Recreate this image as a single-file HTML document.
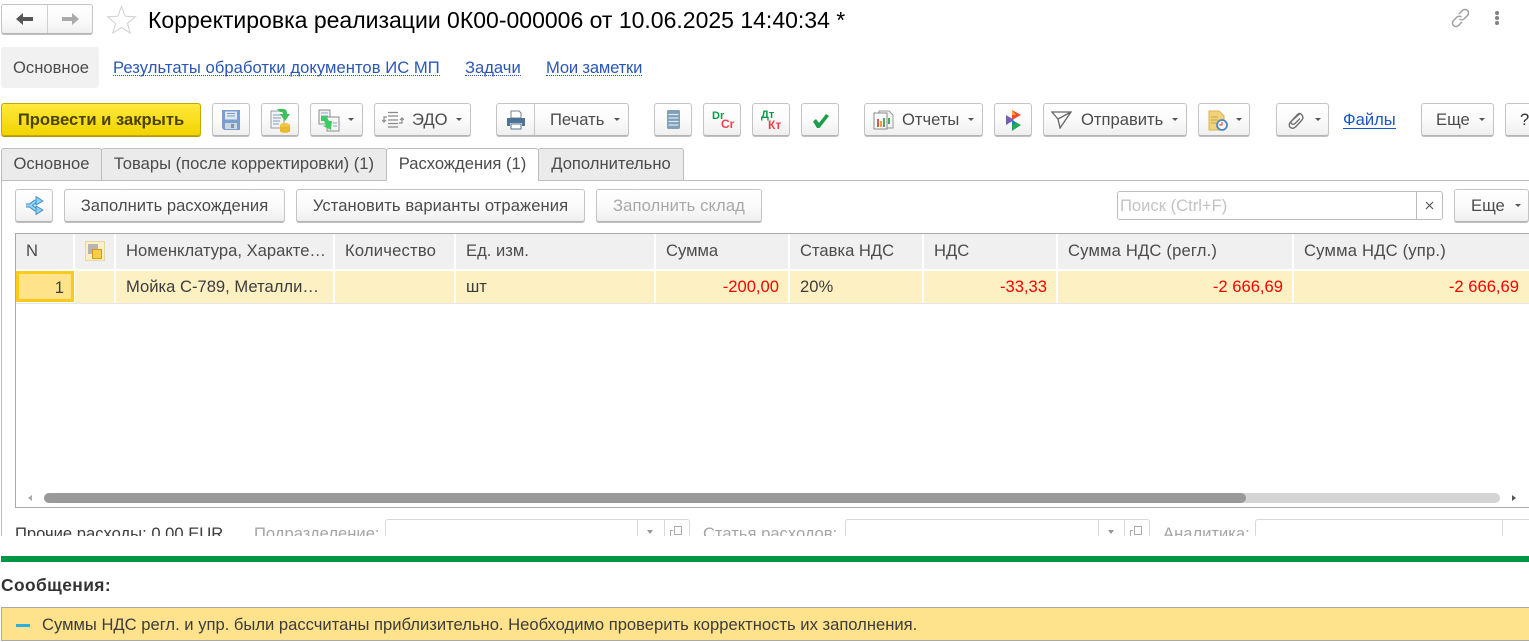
<!DOCTYPE html>
<html lang="ru"><head><meta charset="utf-8"><title>Корректировка реализации</title>
<style>
*{box-sizing:border-box}
html,body{margin:0;padding:0;background:#fff;width:1529px;height:642px;overflow:hidden}
body{position:relative;font-family:"Liberation Sans",sans-serif;font-size:16.6px;color:#4b4b4b}
.t{position:absolute;white-space:nowrap;line-height:20px;height:20px}
.b{position:absolute;height:33px;top:103px;border:1px solid #c4c4c4;border-bottom:1px solid #b4b4b4;border-radius:3px;background:linear-gradient(#fff 0%,#fbfbfb 50%,#efefef 100%);box-shadow:0 1px 0 #c0c0c0}
.b2{top:189px}
.c{text-align:center;line-height:32px;position:absolute;white-space:nowrap}
.ar{position:absolute;width:0;height:0;border-left:3px solid transparent;border-right:3px solid transparent;border-top:3px solid #555;top:14px}
svg{position:absolute;display:block}
.tab{position:absolute;top:148px;height:33px;background:#ebebeb;border:1px solid #bdbdbd;border-radius:3px 3px 0 0;line-height:30px;text-align:center;white-space:nowrap}
.h{position:absolute;top:234px;height:35px;background:#f0f0f0;line-height:34px;padding-left:10px;white-space:nowrap;overflow:hidden;border-right:2px solid #fff}
.r{position:absolute;top:271px;height:32px;background:#fdf1c4;line-height:32px;padding:0 10px;white-space:nowrap;border-right:2px solid #fff;color:#3c3c3c}
.red{color:#f00;text-align:right;padding-right:9px}
.f{position:absolute;top:519px;height:40px;border:1px solid #d8d8d8;border-radius:3px}
.d{position:absolute;top:519px;width:1px;height:20px;background:#d8d8d8}
a{color:inherit}
</style></head><body>

<!-- header -->
<div class="b" style="left:1px;top:4px;width:92px;height:30px"></div>
<div style="position:absolute;left:47px;top:5px;width:1px;height:28px;background:#cfcfcf"></div>
<svg style="left:15px;top:12px" width="20" height="14" viewBox="0 0 20 14"><path d="M1 7 8 1v4h10v4H8v4z" fill="#555"/></svg>
<svg style="left:60px;top:12px" width="20" height="14" viewBox="0 0 20 14"><path d="M19 7 12 1v4H2v4h10v4z" fill="#aaa"/></svg>
<svg style="left:106px;top:5px" width="31" height="29" viewBox="0 0 31 29"><path d="M15.5 1.500 19.200 11.200 29.500 11.800 21.500 18.400 24.200 28 15.500 22.600 6.800 28 9.500 18.400 1.500 11.800 11.800 11.200z" fill="#fff" stroke="#cfcfcf" stroke-width="1"/></svg>
<div class="t" style="left:148px;top:5px;height:30px;line-height:30px;font-size:23px;color:#000">Корректировка реализации 0К00-000006 от 10.06.2025 14:40:34 *</div>
<svg style="left:1450px;top:8px" width="21" height="20" viewBox="0 0 21 20" fill="none" stroke="#9a9a9a" stroke-width="1.400"><path d="M9 6l3.500-3.500a3.400 3.400 0 0 1 5 5L14 11a3.400 3.400 0 0 1-4.500 0"/><path d="M12 14l-3.500 3.500a3.400 3.400 0 0 1-5-5L7 9a3.400 3.400 0 0 1 4.500 0"/></svg>
<svg style="left:1494px;top:10px" width="6" height="16" viewBox="0 0 6 16" fill="#808080"><circle cx="3" cy="3" r="2"/><circle cx="3" cy="8" r="2"/><circle cx="3" cy="13" r="2"/></svg>

<!-- nav -->
<div style="position:absolute;left:1px;top:47px;width:98px;height:41px;background:#f1f1f1;border-radius:3px"></div>
<div class="t" style="left:13px;top:58px">Основное</div>
<div class="t" style="left:113px;top:58px;color:#2a56b5;border-bottom:1px dotted #2a56b5;height:18px;letter-spacing:.05px">Результаты обработки документов ИС МП</div>
<div class="t" style="left:465px;top:58px;color:#2a56b5;border-bottom:1px dotted #2a56b5;height:18px">Задачи</div>
<div class="t" style="left:546px;top:58px;color:#2a56b5;border-bottom:1px dotted #2a56b5;height:18px;letter-spacing:-.18px">Мои заметки</div>

<!-- toolbar -->
<div class="b" style="left:1px;width:200px;background:linear-gradient(#ffe93d,#f1d400);border-color:#c4a900;box-shadow:0 1px 0 #b09800;color:#4a4300;font-weight:bold"><div class="c" style="left:0;width:198px">Провести и закрыть</div></div>

<div class="b" style="left:212px;width:38px"><svg style="left:9px;top:6px" width="18" height="20" viewBox="0 0 18 20"><path d="M0 0h18v20H2l-2-2z" fill="#7a9fcc"/><path d="M3 1.500h12v8H3z" fill="#dfe8f2"/><path d="M5 3.500h8M5 6h8" stroke="#7a9fcc"/><path d="M3 13h12v6H3z" fill="#cfd8e0"/><path d="M9 14h3v4H9z" fill="#7f93aa"/></svg></div>
<div class="b" style="left:261px;width:38px"><svg style="left:8px;top:4px" width="22" height="25" viewBox="0 0 22 25"><path d="M1 3h13v17H1z" fill="#f3f3f3" stroke="#9a9a9a"/><path d="M3 7h8M3 10h8M3 13h7M3 16h6" stroke="#7d9dbb"/><path d="M7 1h6c4 0 4 3 4 5h3l-5 7-5-7h3c0-2-1-2-3-2z" fill="#3cc05a"/><ellipse cx="15" cy="17" rx="5" ry="2" fill="#f1c643"/><path d="M10 17v6c0 2.500 10 2.500 10 0v-6c0 2.500-10 2.500-10 0z" fill="#e8b92f"/></svg></div>
<div class="b" style="left:310px;width:53px"><svg style="left:7px;top:5px" width="22" height="23" viewBox="0 0 22 23"><path d="M1 1h11v14H1z" fill="#f2f2f2" stroke="#8c8c8c"/><path d="M3 4h7M3 7h7" stroke="#8fa5bb"/><path d="M9 8h12v14H9z" fill="#f5f5f5" stroke="#8c8c8c"/><path d="M15 14h4M15 17h4" stroke="#8fa5bb"/><path d="M3 7h5l3 5h3l-1 9-8-4 3-1-2-4H3z" fill="#3ecb60"/></svg><div class="ar" style="left:37px"></div></div>
<div class="b" style="left:374px;width:97px"><svg style="left:7px;top:7px" width="22" height="18" viewBox="0 0 22 18" fill="none" stroke="#8a8a8a" stroke-width="1.200"><path d="M6 1.500h10M6 5h10M6 9h10M6 12.500h10M6 16h10"/><path d="M5 6H2v5M0 9l2 2 2-2"/><path d="M17 12h3V7M18 9l2-2 2 2"/></svg><div class="c" style="left:37px">ЭДО</div><div class="ar" style="left:81px"></div></div>

<div class="b" style="left:496px;width:133px"><div style="position:absolute;left:37px;top:0;width:1px;height:31px;background:#c8c8c8"></div><svg style="left:9px;top:6px" width="20" height="20" viewBox="0 0 20 20"><path d="M5 1h8l2 2v5H5z" fill="#fff" stroke="#77838f"/><path d="M1 8h18v8h-3v-3H4v3H1z" fill="#4e7396"/><path d="M5 14h10v5H5z" fill="#fff" stroke="#4e7396"/></svg><div class="c" style="left:53px">Печать</div><div class="ar" style="left:117px"></div></div>

<div class="b" style="left:654px;width:38px"><svg style="left:12px;top:6px" width="13" height="19" viewBox="0 0 13 19"><rect width="13" height="19" rx="1.500" fill="#7fa0b8"/><path d="M1.500 4.500h10M1.500 8h10M1.500 11.500h10M1.500 15h10" stroke="#dfe8ee" stroke-width="1.200"/></svg></div>
<div class="b" style="left:703px;width:38px"><div style="position:absolute;left:8px;top:6px;font-size:11px;font-weight:bold;color:#0a9a4a;line-height:12px">Dr</div><div style="position:absolute;left:17px;top:14px;font-size:12px;font-weight:bold;color:#ee3f4a;line-height:13px">Cr</div></div>
<div class="b" style="left:752px;width:38px"><div style="position:absolute;left:8px;top:5px;font-size:11px;font-weight:bold;color:#0a9a4a;line-height:12px">Дт</div><div style="position:absolute;left:15px;top:15px;font-size:12px;font-weight:bold;color:#ee3f4a;line-height:13px">Кт</div></div>
<div class="b" style="left:801px;width:38px"><svg style="left:10px;top:9px" width="18" height="16" viewBox="0 0 18 16"><path d="M1 8.500 4 6l3 4 7-9 3 2-9.500 12h-2.500z" fill="#1e9e48"/></svg></div>

<div class="b" style="left:864px;width:119px"><svg style="left:8px;top:6px" width="21" height="20" viewBox="0 0 21 20"><path d="M6 1h10l4 4v13H6z" fill="#f4f4f4" stroke="#9a9a9a"/><path d="M1 3h13v16H1z" fill="#fbfbfb" stroke="#8a8a8a"/><path d="M4 9h2v8H4z" fill="#e0574f"/><path d="M7 11h2v6H7z" fill="#e7a13c"/><path d="M10 8h2v9h-2z" fill="#52a85a"/><path d="M15 8h2v6h-2z" fill="#52a85a"/></svg><div class="c" style="left:37px">Отчеты</div><div class="ar" style="left:103px"></div></div>
<div class="b" style="left:994px;width:38px"><svg style="left:10px;top:6px" width="18" height="21" viewBox="0 0 18 21"><path d="M7 0 16 5 7 10z" fill="#f04b2f"/><path d="M7 0v5l4 0z" fill="#f5a623"/><path d="M1 5l8 5-8 5z" fill="#7b5bb5"/><path d="M7 10l9 5-9 6z" fill="#24a855"/><path d="M7 10l4 2.500L7 15z" fill="#1a7fd4"/></svg></div>
<div class="b" style="left:1043px;width:144px"><svg style="left:7px;top:7px" width="21" height="18" viewBox="0 0 21 18" fill="none" stroke="#666" stroke-width="1.300"><path d="M1 1h19L9 17 7 8zM7 8 20 1"/></svg><div class="c" style="left:37px">Отправить</div><div class="ar" style="left:128px"></div></div>
<div class="b" style="left:1198px;width:52px"><svg style="left:9px;top:6px" width="20" height="21" viewBox="0 0 20 21"><path d="M1 1h10l5 5v14H1z" fill="#f0d27a" stroke="#d8b458"/><path d="M3 7h7M3 10h7M3 13h5" stroke="#c9a548"/><circle cx="14" cy="15" r="5" fill="#fff" stroke="#4b86c4" stroke-width="1.800"/><path d="M14 12v3h-3" stroke="#e84b4b" stroke-width="1.200" fill="none"/></svg><div class="ar" style="left:37px"></div></div>
<div class="b" style="left:1276px;width:53px"><svg style="left:10px;top:8px" width="17" height="18" viewBox="0 0 17 18" fill="none" stroke="#707070" stroke-width="1.400"><path d="M13 1.500 3.500 10c-2 2-1.500 4.500 0 5.500s3.500 1 5-.5l6.500-7c1.500-2 1-4-.5-5.500s-3-1-4 0L4.500 9c-1 1-.5 2.500.5 3s2 .5 3-.5l5-5"/></svg><div class="ar" style="left:38px"></div></div>
<div class="t" style="left:1343px;top:110px;color:#1b55c4;border-bottom:1px solid #1b55c4;height:19px">Файлы</div>
<div class="b" style="left:1421px;width:73px"><div class="c" style="left:14px">Еще</div><div class="ar" style="left:57px"></div></div>
<div class="b" style="left:1505px;width:40px"><div class="c" style="left:14px;color:#333">?</div></div>

<!-- tabs -->
<div style="position:absolute;left:1px;top:180px;width:1px;height:356px;background:#bdbdbd"></div>
<div style="position:absolute;left:1px;top:180px;width:1528px;height:1px;background:#bdbdbd"></div>
<div class="tab" style="left:1px;width:101px">Основное</div>
<div class="tab" style="left:101px;width:286px">Товары (после корректировки) (1)</div>
<div class="tab" style="left:386px;width:153px;background:#fff;border-bottom:1px solid #fff">Расхождения (1)</div>
<div class="tab" style="left:538px;width:146px">Дополнительно</div>

<!-- sub toolbar -->
<div class="b b2" style="left:15px;width:38px"><svg style="left:8px;top:5px" width="21" height="21" viewBox="0 0 21 21" fill="none" stroke-linejoin="round"><path d="M2 10.500h4L12 6M6 10.500 12 15" stroke="#3f8fc6" stroke-width="4"/><path d="M2 10.500h4L12 6M6 10.500 12 15" stroke="#9ad6f7" stroke-width="2"/><path d="M12 1.500 19 6 12 10zM12 11 19 15 12 19.500z" fill="#8cd0f5" stroke="#3f8fc6"/></svg></div>
<div class="b b2" style="left:64px;width:221px"><div class="c" style="left:0;width:219px">Заполнить расхождения</div></div>
<div class="b b2" style="left:296px;width:289px"><div class="c" style="left:0;width:287px;letter-spacing:.07px">Установить варианты отражения</div></div>
<div class="b b2" style="left:596px;width:166px;color:#a8a8a8"><div class="c" style="left:0;width:164px;letter-spacing:.1px">Заполнить склад</div></div>
<div style="position:absolute;left:1117px;top:191px;width:326px;height:29px;border:1px solid #bdbdbd;border-radius:3px;background:#fff"></div>
<div style="position:absolute;left:1416px;top:192px;width:1px;height:27px;background:#bdbdbd"></div>
<div class="t" style="left:1120px;top:196px;color:#c3c3c3">Поиск (Ctrl+F)</div>
<svg style="left:1425px;top:201px" width="9" height="9" viewBox="0 0 9 9"><path d="M1 1l7 7M8 1 1 8" stroke="#555" stroke-width="1.200"/></svg>
<div class="b b2" style="left:1454px;width:75px"><div class="c" style="left:16px">Еще</div><div class="ar" style="left:60px"></div></div>

<!-- table -->
<div style="position:absolute;left:15px;top:233px;width:1530px;height:275px;border:1px solid #a8a8a8;background:#fff"></div>
<div class="h" style="left:16px;width:59px">N</div>
<div class="h" style="left:75px;width:41px"></div>
<svg style="left:85px;top:241px" width="20" height="20" viewBox="0 0 20 20"><path d="M0 0h20v20H0z" fill="#fcf0c4"/><path d="M.5.500h19v19H.5z" fill="none" stroke="#e6d6a0"/><path d="M3 3h10v10H3z" fill="#b5b5b5"/><path d="M7.500 8.500h9v9h-9z" fill="#f6cd47" stroke="#cf9d12"/></svg>
<div class="h" style="left:116px;width:219px">Номенклатура, Характе…</div>
<div class="h" style="left:335px;width:121px;letter-spacing:.2px">Количество</div>
<div class="h" style="left:456px;width:200px">Ед. изм.</div>
<div class="h" style="left:656px;width:134px">Сумма</div>
<div class="h" style="left:790px;width:134px">Ставка НДС</div>
<div class="h" style="left:924px;width:134px">НДС</div>
<div class="h" style="left:1058px;width:236px;letter-spacing:.18px">Сумма НДС (регл.)</div>
<div class="h" style="left:1294px;width:235px;border-right:0;letter-spacing:.2px">Сумма НДС (упр.)</div>
<div style="position:absolute;left:16px;top:303px;width:1513px;height:1px;background:#e6e6e6"></div>

<div class="r" style="left:75px;width:41px"></div>
<div class="r" style="left:16px;width:58px;background:#ffe38a;border:3px solid #fdc91d;text-align:right;padding:0 7px;line-height:27px;height:31px;top:271px">1</div>
<div class="r" style="left:116px;width:219px">Мойка С-789, Металли…</div>
<div class="r" style="left:335px;width:121px"></div>
<div class="r" style="left:456px;width:200px">шт</div>
<div class="r red" style="left:656px;width:134px">-200,00</div>
<div class="r" style="left:790px;width:134px">20%</div>
<div class="r red" style="left:924px;width:134px">-33,33</div>
<div class="r red" style="left:1058px;width:236px">-2 666,69</div>
<div class="r red" style="left:1294px;width:235px;border-right:0;padding-right:10px">-2 666,69</div>

<!-- scrollbar -->
<div style="position:absolute;left:44px;top:493px;width:1456px;height:10px;background:#d5d5d5;border-radius:5px"></div>
<div style="position:absolute;left:44px;top:493px;width:1202px;height:10px;background:#999;border-radius:5px"></div>
<div style="position:absolute;left:28px;top:495px;border-top:3px solid transparent;border-bottom:3px solid transparent;border-right:4px solid #aaa"></div>
<div style="position:absolute;left:1512px;top:495px;border-top:3px solid transparent;border-bottom:3px solid transparent;border-left:4px solid #555"></div>

<!-- clipped fields -->
<div style="position:absolute;left:0;top:510px;width:1529px;height:26px;overflow:hidden">
  <div style="position:absolute;left:0;top:-510px;width:1529px;height:642px">
    <div class="t" style="left:15px;top:524px;color:#3c3c3c">Прочие расходы: 0,00 EUR</div>
    <div class="t" style="left:254px;top:524px;color:#a5a5a5">Подразделение:</div>
    <div class="f" style="left:385px;width:305px"></div>
    <div class="d" style="left:637px"></div><div class="d" style="left:664px"></div>
    <div class="t" style="left:703px;top:524px;color:#a5a5a5">Статья расходов:</div>
    <div class="f" style="left:845px;width:305px"></div>
    <div class="d" style="left:1098px"></div><div class="d" style="left:1124px"></div>
    <div class="t" style="left:1163px;top:524px;color:#a5a5a5">Аналитика:</div>
    <div class="f" style="left:1255px;width:300px"></div>
    <div class="d" style="left:1502px"></div>
    <div style="position:absolute;left:647px;top:530px;border-left:3px solid transparent;border-right:3px solid transparent;border-top:4px solid #999"></div>
    <div style="position:absolute;left:1108px;top:530px;border-left:3px solid transparent;border-right:3px solid transparent;border-top:4px solid #999"></div>
    <div style="position:absolute;left:674px;top:526px;width:8px;height:9px;border:1px solid #aaa"></div>
    <div style="position:absolute;left:670px;top:530px;width:3px;height:6px;border-left:1px solid #aaa;border-top:1px solid #aaa"></div>
    <div style="position:absolute;left:1134px;top:526px;width:8px;height:9px;border:1px solid #aaa"></div>
    <div style="position:absolute;left:1130px;top:530px;width:3px;height:6px;border-left:1px solid #aaa;border-top:1px solid #aaa"></div>
  </div>
</div>

<!-- messages -->
<div style="position:absolute;left:1px;top:556px;width:1528px;height:6px;background:#009646"></div>
<div class="t" style="left:1px;top:575px;font-weight:bold;color:#333;font-size:17.4px;letter-spacing:.4px">Сообщения:</div>
<div style="position:absolute;left:1px;top:607px;width:1528px;height:34px;background:#fee28c;border:1px solid #aaa;border-width:1px 0 1px 1px"></div>
<div style="position:absolute;left:16px;top:624px;width:14px;height:3px;background:#2db0e0"></div>
<div class="t" style="left:42px;top:615px;color:#3c3c3c">Суммы НДС регл. и упр. были рассчитаны приблизительно. Необходимо проверить корректность их заполнения.</div>

</body></html>
